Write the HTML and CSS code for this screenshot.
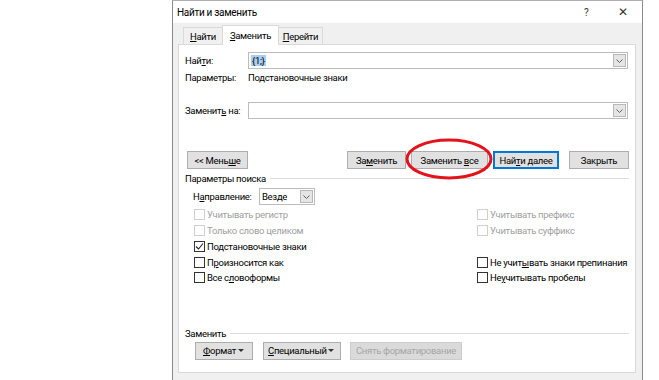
FILE: index.html
```html
<!DOCTYPE html>
<html lang="ru">
  <head>
    <meta charset="UTF-8" />
    <title>Найти и заменить</title>
    <link rel="stylesheet" href="styles.css">
  </head>
  <body>
    <div class="page">
      <!-- Dialog window -->
      <div class="dialog">
        <div class="titlebar">
          <span class="title">Найти и заменить</span>
          <span class="help">?</span>
          <span class="close">&#x2715;</span>
        </div>

        <div class="body">
          <!-- Tabs -->
          <div class="tabs">
            <div class="tab tab-find"><u>Н</u>айти</div>
            <div class="tab tab-replace active"><u>З</u>аменить</div>
            <div class="tab tab-goto"><u>П</u>ерейти</div>
          </div>

          <div class="panel">
            <div class="field find">
              <span class="field-label">Най<u>т</u>и:</span>
              <div class="combo">
                <span class="combo-text"><span class="selected">{1;}</span></span>
                <span class="combo-btn">
                  <svg width="7" height="4" viewBox="0 0 7 4"><polyline points="0.5,0.5 3.5,3.5 6.5,0.5" fill="none" stroke="#606060" stroke-width="1"/></svg>
                </span>
              </div>
            </div>

            <div class="params">
              <span class="field-label">Параметры:</span>
              <span>Подстановочные знаки</span>
            </div>

            <div class="field replace">
              <span class="field-label">Заменит<u>ь</u> на:</span>
              <div class="combo">
                <span class="combo-text"></span>
                <span class="combo-btn">
                  <svg width="7" height="4" viewBox="0 0 7 4"><polyline points="0.5,0.5 3.5,3.5 6.5,0.5" fill="none" stroke="#606060" stroke-width="1"/></svg>
                </span>
              </div>
            </div>

            <div class="actions">
              <button class="btn btn-less">&lt;&lt; Мень<u>ш</u>е</button>
              <div class="actions-right">
                <button class="btn btn-replace">За<u>м</u>енить</button>
                <button class="btn btn-replace-all">Заменить <u>в</u>се</button>
                <button class="btn btn-next default">Най<u>т</u>и далее</button>
                <button class="btn btn-close">Закрыть</button>
              </div>
            </div>

            <div class="group">
              <span class="group-title">Параметры поиска</span>
              <span class="group-line"></span>
            </div>

            <div class="direction">
              <span class="direction-label">Н<u>а</u>правление:</span>
              <div class="select">
                <span class="select-text">Везде</span>
                <span class="select-btn">
                  <svg width="7" height="4" viewBox="0 0 7 4"><polyline points="0.5,0.5 3.5,3.5 6.5,0.5" fill="none" stroke="#606060" stroke-width="1"/></svg>
                </span>
              </div>
            </div>

            <div class="checks">
              <label class="check disabled"><span class="box"></span>Учитывать регистр</label>
              <label class="check disabled"><span class="box"></span>Учитывать префикс</label>
              <label class="check disabled"><span class="box"></span>Только слово целиком</label>
              <label class="check disabled"><span class="box"></span>Учитывать суффикс</label>
              <label class="check"><span class="box">
                <svg width="9" height="9" viewBox="0 0 9 9"><polyline points="1,4.5 3.5,7 8,1.5" fill="none" stroke="#222" stroke-width="1.1"/></svg>
              </span>Подстановочные знаки</label>
              <span class="check-empty"></span>
              <label class="check"><span class="box"></span>П<u>р</u>оизносится как</label>
              <label class="check"><span class="box"></span>Не учит<u>ы</u>вать знаки препинания</label>
              <label class="check"><span class="box"></span>Все с<u>л</u>овоформы</label>
              <label class="check"><span class="box"></span>Не <u>у</u>читывать пробелы</label>
            </div>

            <div class="group group-replace">
              <span class="group-title">Заменить</span>
              <span class="group-line"></span>
            </div>

            <div class="format-row">
              <button class="btn btn-format"><span><u>Ф</u>ормат</span><span class="caret"></span></button>
              <button class="btn btn-special"><span><u>С</u>пециальный</span><span class="caret"></span></button>
              <button class="btn btn-clear" disabled>Снять форматирование</button>
            </div>
          </div>
        </div>
      </div>

      <!-- Red mark drawn over the screenshot -->
      <svg class="mark" width="90" height="44" viewBox="0 0 90 44">
        <ellipse cx="45" cy="22" rx="42" ry="19" fill="none" stroke="#e3121b" stroke-width="3"/>
      </svg>
    </div>
  </body>
</html>
```

FILE: styles.css
```css
html, body {
  margin: 0;
  padding: 0;
  background: #ffffff;
  overflow: hidden;
}

body {
  font-family: Roboto, "Noto Sans", sans-serif;
  font-size: 9.5px;
  letter-spacing: -0.3px;
  color: #000;
  white-space: nowrap;
}

.page {
  position: relative;
  width: 659px;
  height: 380px;
  overflow: hidden;
}

u {
  text-decoration: underline;
  text-underline-offset: 1px;
}

/* Dialog frame */
.dialog {
  margin-left: 172px;
  width: 469px;
  height: 400px;
  border-left: 1px solid #8a8a8a;
  border-right: 1px solid #8a8a8a;
  border-top: 1px solid #b0b0b0;
  background: #f0f0f0;
}

.titlebar {
  height: 22px;
  background: #fff;
  display: flex;
  align-items: center;
  padding-left: 4px;
  font-size: 10px;
}

.title {
  flex: 1;
}

.help {
  width: 34px;
  color: #333;
}

.close {
  width: 24px;
  font-size: 12px;
  color: #333;
}

.body {
  padding: 0 6px 0 5px;
}

/* Tabs */
.tabs {
  height: 21px;
  display: flex;
  align-items: flex-end;
  padding-left: 5px;
}

.tab {
  height: 16px;
  border: 1px solid #d9d9d9;
  border-bottom: none;
  background: #f0f0f0;
  display: flex;
  align-items: center;
  justify-content: center;
}

.tab-find {
  width: 38px;
  border-right: none;
}

.tab-goto {
  width: 43px;
  border-left: none;
}

.tab.active {
  width: 55px;
  height: 19px;
  background: #fff;
  margin-bottom: -1px;
  position: relative;
  z-index: 1;
}

.panel {
  height: 327px;
  border: 1px solid #d9d9d9;
  background: #fff;
  padding: 0 6px 0 6px;
}

/* Find / replace fields */
.field {
  display: flex;
  align-items: center;
}

.find {
  margin-top: 7px;
}

.replace {
  margin-top: 16px;
}

.field-label {
  width: 63px;
  flex-shrink: 0;
}

.combo {
  width: 380px;
  height: 17px;
  box-sizing: border-box;
  border: 1px solid #bcbcbc;
  display: flex;
  align-items: center;
  padding-right: 1px;
}

.combo-text {
  flex: 1;
  padding-left: 2px;
}

.selected {
  background: #a9cdf1;
  padding: 0 1px;
}

.combo-btn,
.select-btn {
  width: 13px;
  height: 13px;
  box-sizing: border-box;
  border: 1px solid #b8b8b8;
  background: #e5e5e5;
  display: flex;
  align-items: center;
  justify-content: center;
}

.params {
  display: flex;
  height: 17px;
  align-items: center;
}

/* Buttons */
.btn {
  font-family: inherit;
  font-size: 9.5px;
  letter-spacing: -0.3px;
  height: 18px;
  padding: 0;
  margin: 0;
  border: 1px solid #adadad;
  background: #e1e1e1;
  color: #000;
  box-sizing: border-box;
  white-space: nowrap;
}

.actions {
  margin-top: 32px;
  display: flex;
  align-items: center;
}

.actions-right {
  margin-left: auto;
  display: flex;
}

.btn-less {
  width: 61px;
  margin-left: 2px;
}

.btn-replace {
  width: 59px;
}

.btn-replace-all {
  width: 77px;
  margin-left: 5px;
}

.btn-next {
  width: 66px;
  margin-left: 5px;
}

.btn.default {
  border: 2px solid #0078d7;
}

.btn-close {
  width: 60px;
  margin-left: 10px;
}

/* Group captions */
.group {
  display: flex;
  align-items: center;
  height: 13px;
  margin-top: 3px;
}

.group-title {
  padding-right: 4px;
}

.group-line {
  flex: 1;
  border-top: 1px solid #dcdcdc;
}

.group-replace {
  margin-top: 41px;
}

/* Direction */
.direction {
  display: flex;
  align-items: center;
  margin-top: 3px;
  padding-left: 8px;
}

.direction-label {
  width: 66px;
}

.select {
  width: 56px;
  height: 17px;
  box-sizing: border-box;
  border: 1px solid #bcbcbc;
  display: flex;
  align-items: center;
  padding-right: 1px;
}

.select-text {
  flex: 1;
  padding-left: 2px;
}

/* Checkboxes */
.checks {
  margin-top: 2px;
  display: grid;
  grid-template-columns: 283px 1fr;
  grid-auto-rows: 15.75px;
  padding-left: 9px;
}

.check {
  display: flex;
  align-items: center;
}

.box {
  width: 11px;
  height: 11px;
  box-sizing: border-box;
  border: 1px solid #333;
  background: #fff;
  margin-right: 2px;
  display: flex;
  align-items: center;
  justify-content: center;
}

.check.disabled {
  color: #a0a0a0;
}

.check.disabled .box {
  border-color: #cfcfcf;
}

/* Format buttons */
.format-row {
  display: flex;
  margin-top: 2px;
  padding-left: 10px;
}

.btn-format,
.btn-special {
  display: flex;
  align-items: center;
}

.btn-format {
  width: 58px;
  padding: 0 8px 0 7px;
}

.btn-special {
  width: 78px;
  margin-left: 10px;
  padding: 0 6px 0 4px;
}

.caret {
  margin-left: auto;
  width: 0;
  height: 0;
  border-left: 3px solid transparent;
  border-right: 3px solid transparent;
  border-top: 3px solid #333;
}

.btn-clear {
  width: 112px;
  margin-left: 9px;
  background: #dadada;
  border-color: #cccccc;
  color: #a6a6a6;
}

/* Red highlight around "Заменить все" */
.mark {
  position: absolute;
  left: 404px;
  top: 137px;
}
```
